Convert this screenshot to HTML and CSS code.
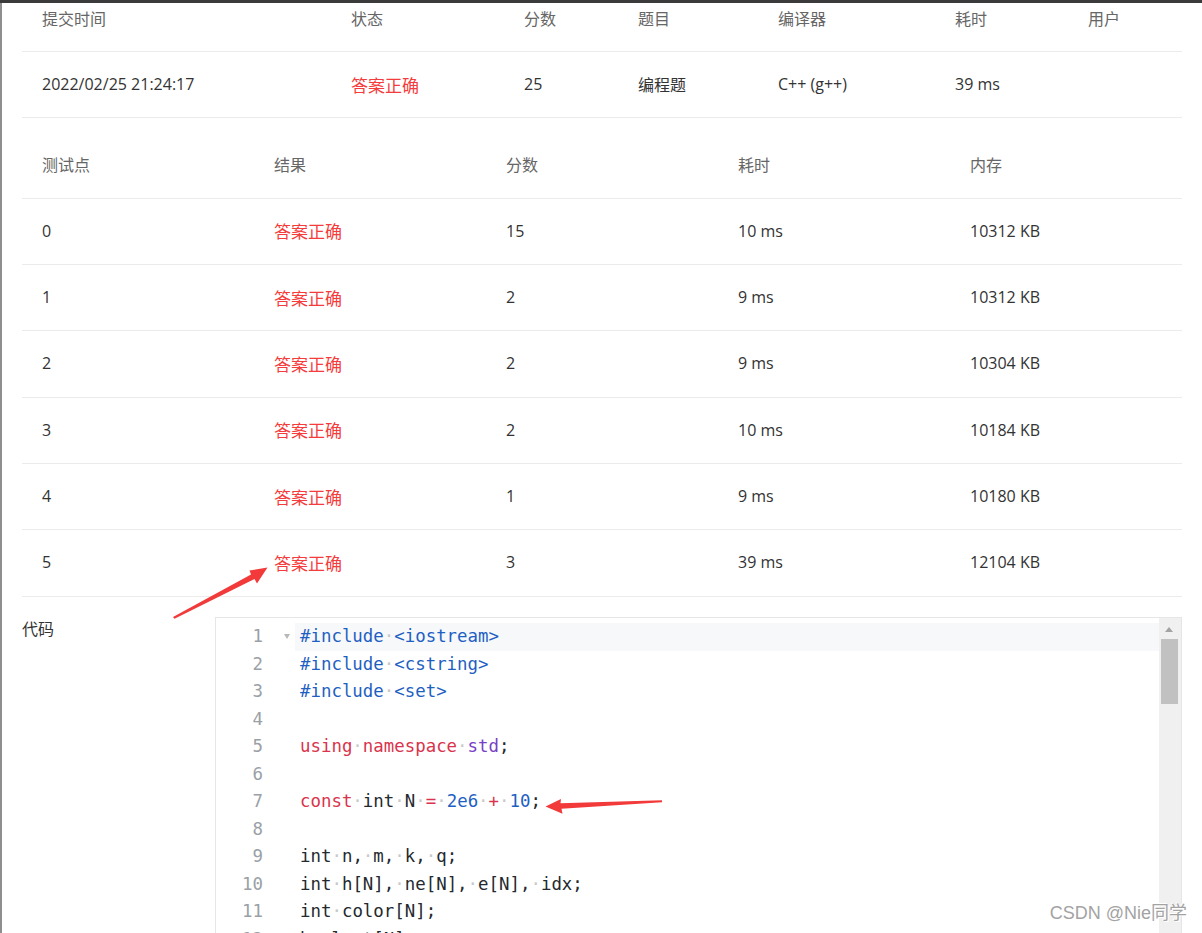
FILE: index.html
```html
<!DOCTYPE html>
<html lang="zh-CN">
<head>
<meta charset="utf-8">
<title>提交详情</title>
<link rel="stylesheet" href="styles.css">
</head>
<body>
<div class="topbar"></div>
<div class="leftedge"></div>
<main class="page">
  <table class="grid grid-sub">
    <colgroup>
      <col class="s1"><col class="s2"><col class="s3"><col class="s4"><col class="s5"><col class="s6"><col class="s7">
    </colgroup>
    <thead>
      <tr><th>提交时间</th><th>状态</th><th>分数</th><th>题目</th><th>编译器</th><th>耗时</th><th>用户</th></tr>
    </thead>
    <tbody>
      <tr><td>2022/02/25 21:24:17</td><td class="ok">答案正确</td><td>25</td><td>编程题</td><td>C++ (g++)</td><td>39 ms</td><td></td></tr>
    </tbody>
  </table>

  <table class="grid grid-cases">
    <colgroup><col><col><col><col><col></colgroup>
    <thead>
      <tr><th>测试点</th><th>结果</th><th>分数</th><th>耗时</th><th>内存</th></tr>
    </thead>
    <tbody>
      <tr><td>0</td><td class="ok">答案正确</td><td>15</td><td>10 ms</td><td>10312 KB</td></tr>
      <tr><td>1</td><td class="ok">答案正确</td><td>2</td><td>9 ms</td><td>10312 KB</td></tr>
      <tr><td>2</td><td class="ok">答案正确</td><td>2</td><td>9 ms</td><td>10304 KB</td></tr>
      <tr><td>3</td><td class="ok">答案正确</td><td>2</td><td>10 ms</td><td>10184 KB</td></tr>
      <tr><td>4</td><td class="ok">答案正确</td><td>1</td><td>9 ms</td><td>10180 KB</td></tr>
      <tr><td>5</td><td class="ok">答案正确</td><td>3</td><td>39 ms</td><td>12104 KB</td></tr>
    </tbody>
  </table>

  <section class="code-sec">
    <div class="code-label">代码</div>
    <div class="editor">
      <div class="code">
        <div class="line active"><span class="ln">1</span><span class="fold"></span><span class="src"><span class="b">#include</span><span class="ws">·</span><span class="b">&lt;iostream&gt;</span></span></div>
        <div class="line"><span class="ln">2</span><span class="fold"></span><span class="src"><span class="b">#include</span><span class="ws">·</span><span class="b">&lt;cstring&gt;</span></span></div>
        <div class="line"><span class="ln">3</span><span class="fold"></span><span class="src"><span class="b">#include</span><span class="ws">·</span><span class="b">&lt;set&gt;</span></span></div>
        <div class="line"><span class="ln">4</span><span class="fold"></span><span class="src"></span></div>
        <div class="line"><span class="ln">5</span><span class="fold"></span><span class="src"><span class="r">using</span><span class="ws">·</span><span class="r">namespace</span><span class="ws">·</span><span class="p">std</span>;</span></div>
        <div class="line"><span class="ln">6</span><span class="fold"></span><span class="src"></span></div>
        <div class="line"><span class="ln">7</span><span class="fold"></span><span class="src"><span class="r">const</span><span class="ws">·</span>int<span class="ws">·</span>N<span class="ws">·</span><span class="r">=</span><span class="ws">·</span><span class="b">2e6</span><span class="ws">·</span><span class="r">+</span><span class="ws">·</span><span class="b">10</span>;</span></div>
        <div class="line"><span class="ln">8</span><span class="fold"></span><span class="src"></span></div>
        <div class="line"><span class="ln">9</span><span class="fold"></span><span class="src">int<span class="ws">·</span>n,<span class="ws">·</span>m,<span class="ws">·</span>k,<span class="ws">·</span>q;</span></div>
        <div class="line"><span class="ln">10</span><span class="fold"></span><span class="src">int<span class="ws">·</span>h[N],<span class="ws">·</span>ne[N],<span class="ws">·</span>e[N],<span class="ws">·</span>idx;</span></div>
        <div class="line"><span class="ln">11</span><span class="fold"></span><span class="src">int<span class="ws">·</span>color[N];</span></div>
        <div class="line"><span class="ln">12</span><span class="fold"></span><span class="src">bool<span class="ws">·</span>st[N];</span></div>
      </div>
      <div class="vscroll">
        <div class="up"></div>
        <div class="thumb"></div>
      </div>
    </div>
  </section>
</main>

<svg class="annot" width="1202" height="933" viewBox="0 0 1202 933" aria-hidden="true">
  <polygon fill="#f23a3a" points="173,617 251,574.5 249.5,570.5 267.5,567.5 257,583.5 254.5,579 174.5,618.8"/>
  <polygon fill="#f23a3a" points="545.5,806.5 561,799 560.5,803.2 662,800.3 662,802.2 561.5,808.8 562.5,813.8"/>
</svg>

<div class="watermark">CSDN @Nie同学</div>
</body>
</html>
```

FILE: styles.css
```css
html, body {
  margin: 0;
  padding: 0;
  overflow: hidden;
  background: #ffffff;
}

body {
  font-family: "Open Sans", "Noto Sans CJK SC", sans-serif;
  color: #333333;
  font-size: 16px;
}

.topbar {
  position: absolute;
  top: 0;
  left: 0;
  right: 0;
  height: 3px;
  background: #3b3b3b;
  z-index: 5;
}

.leftedge {
  position: absolute;
  top: 0;
  left: 0;
  width: 2px;
  height: 933px;
  background: #8e8e8e;
  z-index: 4;
}

.page {
  margin-top: -14.33px;
  padding-left: 22px;
  width: 1160px;
}

.grid {
  width: 1160px;
  table-layout: fixed;
  border-collapse: separate;
  border-spacing: 0;
}

.grid th,
.grid td {
  box-sizing: border-box;
  height: 66.33px;
  padding: 0 0 1px 20px;
  border-bottom: 1px solid #ebebeb;
  text-align: left;
  vertical-align: middle;
  white-space: nowrap;
  font-size: 16px;
}

.grid th {
  font-weight: normal;
  color: #666666;
}

.grid td {
  color: #333333;
}

.grid td.ok {
  color: #f53c3c;
  font-size: 17px;
}

.s1 { width: 309px; }
.s2 { width: 173px; }
.s3 { width: 114px; }
.s4 { width: 140px; }
.s5 { width: 177px; }
.s6 { width: 133px; }
.s7 { width: 114px; }

.grid-cases {
  margin-top: 14px;
}

.grid-cases col {
  width: 232px;
}

.code-sec {
  margin-top: 20px;
  display: flex;
  align-items: flex-start;
}

.code-label {
  width: 193px;
  flex: none;
  font-size: 16px;
  line-height: 24px;
  color: #333333;
}

.editor {
  width: 965px;
  height: 400px;
  border: 1px solid #e6e6e6;
  display: flex;
}

.code {
  flex: 1;
  padding-top: 5.5px;
  font-family: "DejaVu Sans Mono", "Liberation Mono", monospace;
  font-size: 17.4px;
  color: #24292e;
}

.line {
  display: flex;
  height: 27.5px;
  line-height: 27.5px;
  white-space: pre;
}

.ln {
  width: 47px;
  flex: none;
  text-align: right;
  color: #9aa0a6;
}

.fold {
  width: 32px;
  flex: none;
  position: relative;
}

.line.active .fold::after {
  content: "";
  position: absolute;
  left: 21px;
  top: 11px;
  border-left: 3.5px solid transparent;
  border-right: 3.5px solid transparent;
  border-top: 5px solid #b8b8b8;
}

.src {
  flex: 1;
  padding-left: 5px;
}

.line.active .src {
  background: #f6f8fa;
}

.b { color: #1f5fc2; }
.r { color: #d9344c; }
.p { color: #7a3fc4; }
.ws { color: #c9c9c9; }

.vscroll {
  width: 22px;
  flex: none;
  background: #f0f0f0;
  display: flex;
  flex-direction: column;
  align-items: flex-start;
}

.up {
  margin: 9px 0 0 6px;
  width: 0;
  height: 0;
  border-left: 4.5px solid transparent;
  border-right: 4.5px solid transparent;
  border-bottom: 5px solid #a3a3a3;
}

.thumb {
  margin: 7px 0 0 2px;
  width: 17px;
  height: 65px;
  background: #c1c1c1;
}

.annot {
  position: absolute;
  top: 0;
  left: 0;
  pointer-events: none;
  z-index: 6;
}

.watermark {
  position: absolute;
  right: 15px;
  bottom: 9px;
  font-family: "Liberation Sans", "Noto Sans CJK SC", sans-serif;
  font-size: 18px;
  color: #a3a3a3;
  text-shadow: 1px 1px 0 #ffffff, -1px -1px 0 #ffffff;
  z-index: 7;
}
```
